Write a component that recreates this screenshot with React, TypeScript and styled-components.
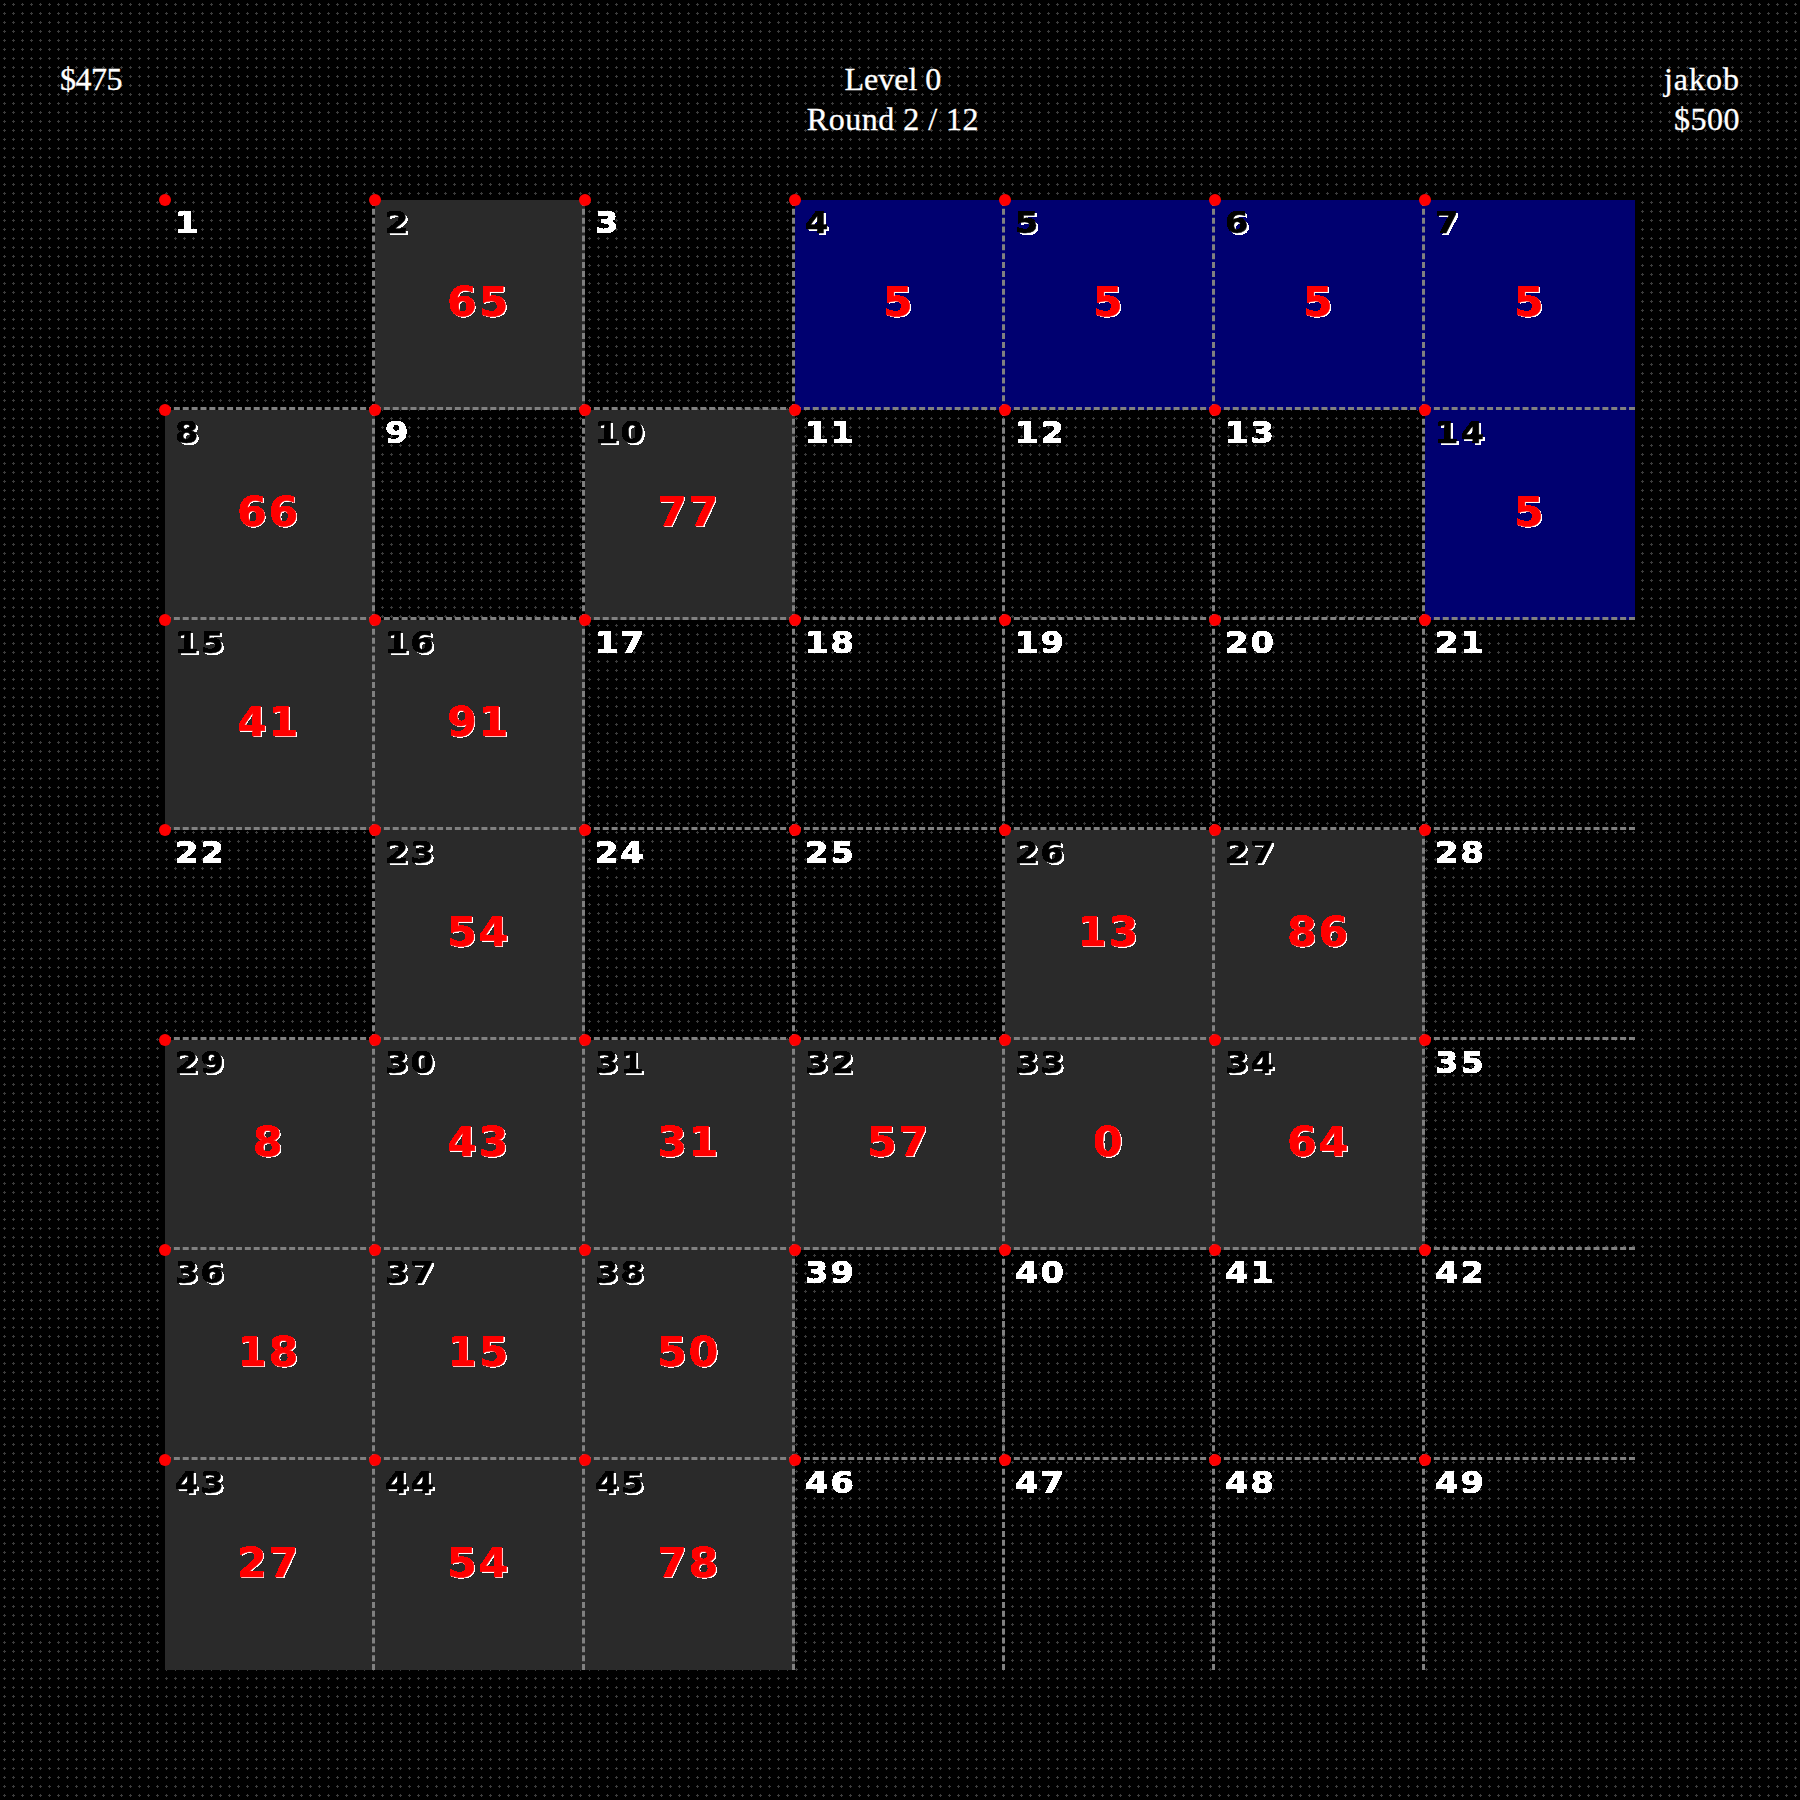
import styled, { createGlobalStyle } from 'styled-components';

const GlobalStyle = createGlobalStyle`
  html, body {
    margin: 0;
    padding: 0;
    background-color: #000;
  }
`;

const plusTile =
  "url(\"data:image/svg+xml,%3Csvg xmlns='http://www.w3.org/2000/svg' width='9' height='9' shape-rendering='crispEdges'%3E%3Cpath fill='%233c3c3c' d='M4 3h1v3h-1zM3 4h3v1h-3z'/%3E%3C/svg%3E\")";

const Page = styled.div`
  width: 1800px;
  height: 1800px;
  box-sizing: border-box;
  padding: 60px 60px 0;
  background-color: #000;
  background-image: ${plusTile};
  background-size: 9px 9px;
  color: #fff;
  font-family: 'Liberation Serif', serif;
`;

const FilterDefs = styled.svg`
  display: block;
  width: 0;
  height: 0;
`;

const Header = styled.header`
  display: flex;
  justify-content: space-between;
  height: 80px;
  margin-bottom: 60px;
  font-size: 32px;
  line-height: 40px;
  -webkit-text-stroke: 0.3px #fff;
`;

const HeaderBlock = styled.div<{ $align: string }>`
  text-align: ${(p) => p.$align};
`;

const HeaderLine = styled.div<{ $tracking: number }>`
  letter-spacing: ${(p) => p.$tracking}px;
  transform: translateY(-1px);
`;

const Board = styled.div`
  display: grid;
  grid-template-columns: repeat(7, 210px);
  grid-auto-rows: 210px;
  width: 1470px;
  margin: 0 auto;
`;

const cellColors: Record<string, string> = {
  empty: 'transparent',
  filled: '#2a2a2a',
  owned: '#000070',
};

const Cell = styled.div<{ $kind: string; $lastCol: boolean; $lastRow: boolean }>`
  position: relative;
  box-sizing: border-box;
  display: flex;
  align-items: center;
  justify-content: center;
  padding-bottom: 4px;
  background-color: ${(p) => cellColors[p.$kind]};
  border-right: ${(p) => (p.$lastCol ? 'none' : '3px dashed #808080')};
  border-bottom: ${(p) => (p.$lastRow ? 'none' : '3px dashed #808080')};

  &::before {
    content: '';
    position: absolute;
    top: -6px;
    left: -6px;
    width: 12px;
    height: 12px;
    border-radius: 50%;
    background: #f00;
  }
`;

const CellIndex = styled.span<{ $kind: string }>`
  position: absolute;
  top: 5px;
  left: 10px;
  font-family: 'DejaVu Sans', sans-serif;
  font-weight: 700;
  font-size: 30px;
  line-height: 36px;
  letter-spacing: 2px;
  transform: scaleX(1.12);
  transform-origin: left center;
  filter: url(#crisp);
  -webkit-text-stroke: 0.5px ${(p) => (p.$kind === 'empty' ? '#fff' : '#000')};
  color: ${(p) => (p.$kind === 'empty' ? '#fff' : '#000')};
  text-shadow: ${(p) => (p.$kind === 'empty' ? 'none' : '2px 2px 0 #fff')};
`;

const CellValue = styled.span`
  display: inline-block;
  font-family: 'DejaVu Sans', sans-serif;
  font-weight: 700;
  font-size: 40px;
  line-height: 48px;
  letter-spacing: 2px;
  transform: scaleX(1.06);
  filter: url(#crisp);
  -webkit-text-stroke: 0.6px #f00;
  color: #f00;
  text-shadow: 1px 1px 0 #fff;
`;

const values: Record<number, number> = {
  2: 65, 4: 5, 5: 5, 6: 5, 7: 5, 8: 66, 10: 77, 14: 5, 15: 41, 16: 91,
  23: 54, 26: 13, 27: 86, 29: 8, 30: 43, 31: 31, 32: 57, 33: 0, 34: 64,
  36: 18, 37: 15, 38: 50, 43: 27, 44: 54, 45: 78,
};

const owned = [4, 5, 6, 7, 14];

const cells = Array.from({ length: 49 }, (_, i) => i + 1);

function App() {
  return (
    <Page>
      <GlobalStyle />
      {/* hard alpha edge, the numbers in the picture are an unsmoothed pixel face */}
      <FilterDefs>
        <filter id="crisp" x="-10%" y="-10%" width="120%" height="120%">
          <feComponentTransfer>
            <feFuncA type="discrete" tableValues="0 1 1" />
          </feComponentTransfer>
        </filter>
      </FilterDefs>
      <Header>
        <HeaderBlock $align="left">
          <HeaderLine $tracking={-0.5}>$475</HeaderLine>
        </HeaderBlock>
        <HeaderBlock $align="center">
          <HeaderLine $tracking={0}>Level 0</HeaderLine>
          <HeaderLine $tracking={0.5}>Round 2 / 12</HeaderLine>
        </HeaderBlock>
        <HeaderBlock $align="right">
          <HeaderLine $tracking={1}>jakob</HeaderLine>
          <HeaderLine $tracking={0.5}>$500</HeaderLine>
        </HeaderBlock>
      </Header>
      <Board>
        {cells.map((n) => {
          const value = values[n];
          const kind = owned.includes(n) ? 'owned' : value !== undefined ? 'filled' : 'empty';
          return (
            <Cell key={n} $kind={kind} $lastCol={n % 7 === 0} $lastRow={n > 42}>
              <CellIndex $kind={kind}>{n}</CellIndex>
              {value !== undefined && <CellValue>{value}</CellValue>}
            </Cell>
          );
        })}
      </Board>
    </Page>
  );
}

export default App;
